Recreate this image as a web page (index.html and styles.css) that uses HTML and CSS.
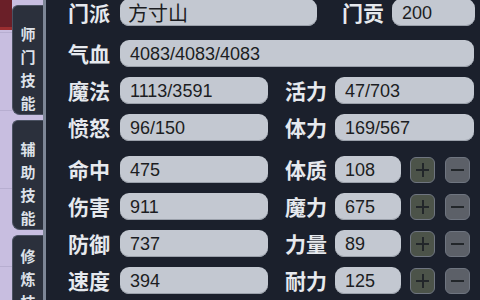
FILE: index.html
```html
<!DOCTYPE html>
<html lang="zh">
<head>
  <meta charset="UTF-8">
  <title>人物属性</title>
  <link rel="stylesheet" href="styles.css">
</head>
<body>

<!-- 左侧标签 -->
<div class="side">
  <div class="side-strip">
    <div class="strip-red"></div>
  </div>
  <div class="tabs">
    <div class="tab tab-first">师<br>门<br>技<br>能</div>
    <div class="tab">辅<br>助<br>技<br>能</div>
    <div class="tab tab-last">修<br>炼<br>技</div>
  </div>
</div>

<!-- 属性面板 -->
<div class="panel">
  <div class="row row-first">
    <span class="label">门派</span>
    <span class="box box-sect cjk">方寸山</span>
    <span class="label label-gong">门贡</span>
    <span class="box box-gong">200</span>
  </div>
  <div class="row row-hp">
    <span class="label">气血</span>
    <span class="box box-full">4083/4083/4083</span>
  </div>
  <div class="row">
    <span class="label">魔法</span>
    <span class="box box-left">1113/3591</span>
    <span class="label label-right">活力</span>
    <span class="box box-right">47/703</span>
  </div>
  <div class="row">
    <span class="label">愤怒</span>
    <span class="box box-left">96/150</span>
    <span class="label label-right">体力</span>
    <span class="box box-right">169/567</span>
  </div>
  <div class="row row-attr">
    <span class="label">命中</span>
    <span class="box box-left">475</span>
    <span class="label label-right">体质</span>
    <span class="box box-small">108</span>
    <span class="btn btn-plus"></span>
    <span class="btn btn-minus"></span>
  </div>
  <div class="row">
    <span class="label">伤害</span>
    <span class="box box-left">911</span>
    <span class="label label-right">魔力</span>
    <span class="box box-small">675</span>
    <span class="btn btn-plus"></span>
    <span class="btn btn-minus"></span>
  </div>
  <div class="row">
    <span class="label">防御</span>
    <span class="box box-left">737</span>
    <span class="label label-right">力量</span>
    <span class="box box-small">89</span>
    <span class="btn btn-plus"></span>
    <span class="btn btn-minus"></span>
  </div>
  <div class="row">
    <span class="label">速度</span>
    <span class="box box-left">394</span>
    <span class="label label-right">耐力</span>
    <span class="box box-small">125</span>
    <span class="btn btn-plus"></span>
    <span class="btn btn-minus"></span>
  </div>
</div>

</body>
</html>
```

FILE: styles.css
```css
* {
  box-sizing: border-box;
}
html, body {
  height: 100%;
}
body {
  margin: 0;
  display: flex;
  overflow: hidden;
  background: #1b202c;
  font-family: "Noto Sans CJK SC", "Liberation Sans", sans-serif;
}
/* 左侧 */
.side {
  width: 46px;
  display: flex;
  flex-shrink: 0;
}
.side-strip {
  width: 12px;
  background: #c8bee0;
  background-image: linear-gradient(#b7aed0 1px, transparent 1px);
  background-size: 12px 78px;
  background-position: 0 32px;
}
.strip-red {
  height: 30px;
  background: #6a1f28;
  border-bottom: 3px solid #9a2e30;
}
.tabs {
  width: 34px;
  display: flex;
  flex-direction: column;
  gap: 5px;
  border-right: 3px solid #7d8696;
  background: #c8bee0;
  overflow: hidden;
}
.tab {
  background: #2b303c;
  border: 1px solid #4b5262;
  border-right: none;
  border-radius: 6px 0 0 8px;
  color: #dde1e8;
  font-size: 15px;
  font-weight: bold;
  line-height: 23px;
  text-align: center;
  padding-top: 16px;
  height: 110px;
  flex-shrink: 0;
}
.tab-first {
  margin-top: 5px;
}
.tab-last {
  flex: 1;
  border-radius: 6px 0 0 0;
  padding-top: 8px;
}
/* 面板 */
.panel {
  flex: 1;
  padding-left: 22px;
  display: flex;
  flex-direction: column;
  gap: 10px;
}
.row {
  display: flex;
  align-items: center;
  height: 27px;
  flex-shrink: 0;
}
.row-first {
  margin-top: -1px;
}
.row-hp {
  margin-top: 4px;
}
.row-attr {
  margin-top: 5px;
}
.label {
  width: 52px;
  color: #e6e9ee;
  font-size: 21px;
  font-weight: bold;
  line-height: 27px;
}
.label-right {
  width: 50px;
  margin-left: 17px;
}
.label-gong {
  width: 50px;
  margin-left: 25px;
}
.box {
  height: 27px;
  background: #c3c8d1;
  border-radius: 9px;
  padding-left: 10px;
  color: #1c1d22;
  font-family: "Liberation Sans", sans-serif;
  font-size: 18px;
  line-height: 28px;
  box-shadow: inset 0 -1px 0 #9aa0aa;
}
.box.cjk {
  font-family: "Noto Sans CJK SC", sans-serif;
  font-size: 20px;
  line-height: 27px;
  padding-left: 8px;
}
.box-sect {
  width: 197px;
}
.box-gong {
  width: 83px;
}
.box-full {
  width: 354px;
}
.box-left {
  width: 148px;
}
.box-right {
  width: 139px;
}
.box-small {
  width: 66px;
}
/* 加减按钮 */
.btn {
  position: relative;
  width: 25px;
  height: 26px;
  border-radius: 6px;
  margin-left: 10px;
  border: 1px solid #6f7580;
}
.btn-plus {
  margin-left: 9px;
  background: #4c5349;
}
.btn-minus {
  background: #5c6068;
}
.btn::before,
.btn::after {
  content: "";
  position: absolute;
  background: #22262a;
}
.btn::before {
  left: 5px;
  right: 5px;
  top: 11px;
  height: 2px;
}
.btn-plus::after {
  top: 5px;
  bottom: 5px;
  left: 11px;
  width: 2px;
}
```
